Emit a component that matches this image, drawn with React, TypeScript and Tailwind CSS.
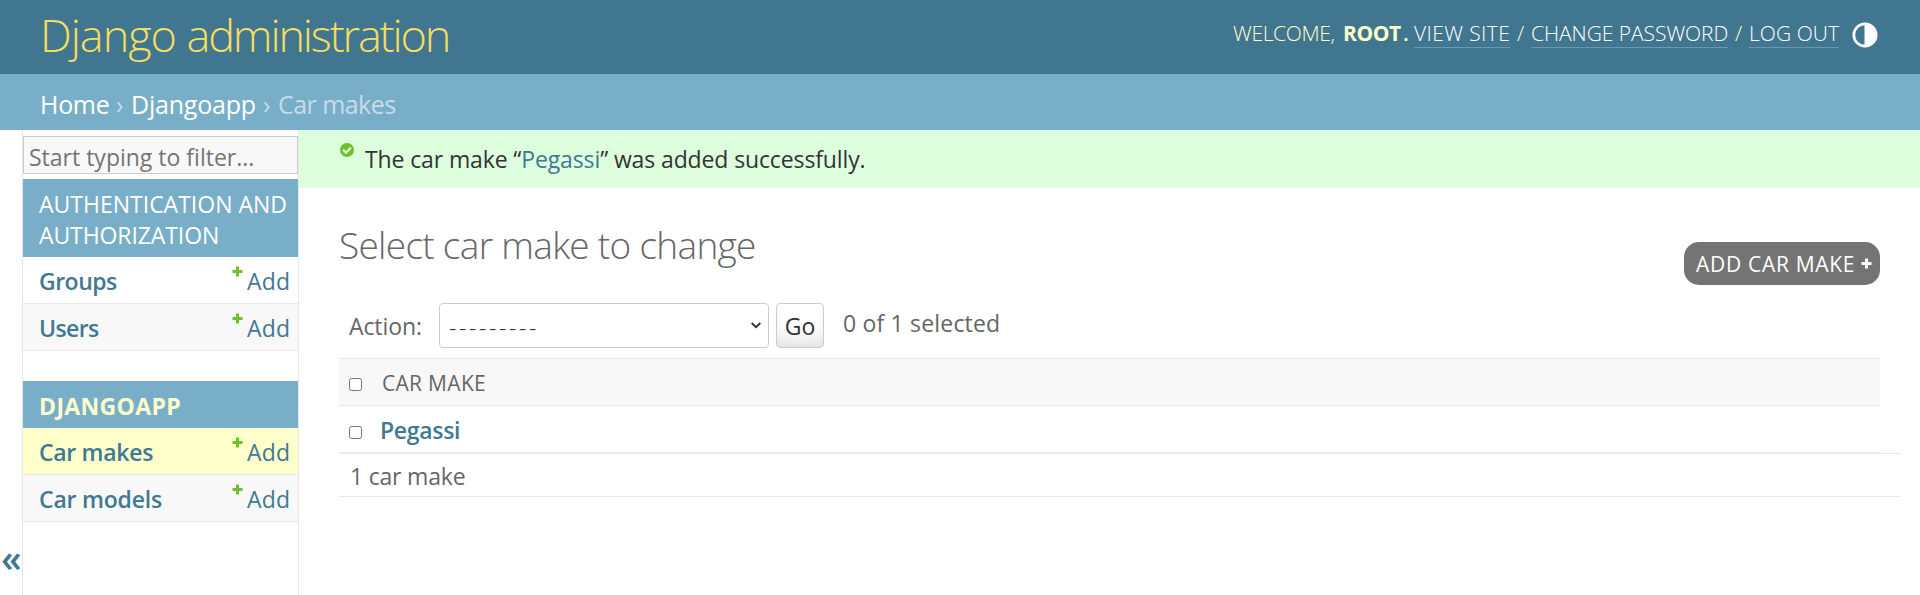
import React from "react";

function PlusIcon({ className }: { className: string }) {
  return (
    <svg viewBox="0 0 11 11" className={className} aria-hidden="true">
      <path
        d="M4 0.500h3v3.500h3.500v3h-3.500v3.500h-3v-3.500h-3.500v-3h3.500z"
        fill="currentColor"
      />
    </svg>
  );
}

function ThemeIcon() {
  return (
    <svg viewBox="0 0 26 26" className="ml-[13px] mt-[3px] h-[26px] w-[26px]" aria-hidden="true">
      <circle cx="13" cy="13" r="11.200" fill="none" stroke="#fff" strokeWidth="2.700" />
      <path d="M12.500 1a12 12 0 0 1 0 24z" fill="#fff" />
    </svg>
  );
}

function SuccessIcon() {
  return (
    <svg viewBox="0 0 14 14" className="mt-[13px] h-[14px] w-[14px]" aria-hidden="true">
      <circle cx="7" cy="7" r="7" fill="#70bf2b" />
      <path d="M3.200 6.800l2.800 2.900l4.800-5" fill="none" stroke="#ddffdd" strokeWidth="2.200" />
    </svg>
  );
}

function UserTools() {
  return (
    <div className="flex items-start whitespace-pre pr-[42px] pt-[19px] text-[21px] font-light leading-[28px] text-[#ffffcc]">
      <span className="w-[110px] tracking-[-0.35px]">WELCOME,</span>
      <strong className="w-[60px] font-bold tracking-[-0.4px]">ROOT</strong>
      <span className="w-[11px] font-semibold">.</span>
      <a className="w-[96px] border-b border-[#6c98ab] tracking-[0.4px] text-white">VIEW SITE</a>
      <span className="w-[21px] text-center">/</span>
      <a className="w-[197px] border-b border-[#6c98ab] tracking-[-0.05px] text-white">CHANGE PASSWORD</a>
      <span className="w-[21px] text-center">/</span>
      <a className="w-[90px] border-b border-[#6c98ab] tracking-[0.05px] text-white">LOG OUT</a>
      <ThemeIcon />
    </div>
  );
}

function ModelRow({ label, tone, spacing }: { label: string; tone: string; spacing: string }) {
  return (
    <div className={`flex h-[47px] items-start border-b border-[#e8e8e8] pl-4 pr-[8px] text-[#417893] ${tone}`}>
      <a className={`flex-1 pt-px font-semibold leading-[46px] ${spacing}`}>{label}</a>
      <PlusIcon className="mr-1 mt-[9px] h-[11px] w-[11px] text-[#70bf2b]" />
      <a className="w-[43px] pt-px leading-[46px] tracking-[0.15px]">Add</a>
    </div>
  );
}

function Sidebar() {
  return (
    <div className="flex shrink-0">
      <button className="h-[465px] w-[22px] pt-[390px] text-left text-[37px] font-semibold leading-[50px] text-[#417893]">
        <span className="block pl-[1px]">«</span>
      </button>
      <nav className="h-[465px] w-[277px] border-x border-[#e8e8e8] text-[23px]">
        <input
          placeholder="Start typing to filter..."
          className="mt-[6px] block h-[38px] w-[275px] border border-[#ccc] bg-[#f8f8f8] pl-[5px] pt-[3px] placeholder:text-[#757575] placeholder:opacity-100"
        />
        <div className="mt-[5px] h-[78px] whitespace-nowrap bg-[#79aec8] pl-4 pt-[10px] leading-[31px] text-white">
          <div>AUTHENTICATION AND</div>
          <div className="tracking-[-0.1px]">AUTHORIZATION</div>
        </div>
        <ModelRow label="Groups" tone="bg-white" spacing="tracking-[-0.5px]" />
        <ModelRow label="Users" tone="bg-[#f8f8f8]" spacing="tracking-[-0.6px]" />
        <div className="mt-[30px] h-[47px] bg-[#79aec8] pl-4 pt-[2px] font-bold leading-[46px] tracking-[0.35px] text-[#ffffcc]">
          DJANGOAPP
        </div>
        <ModelRow label="Car makes" tone="bg-[#ffffcc]" spacing="tracking-[-0.3px]" />
        <ModelRow label="Car models" tone="bg-[#f8f8f8]" spacing="tracking-[-0.2px]" />
      </nav>
    </div>
  );
}

function Results() {
  return (
    <div className="ml-10 mr-5 text-[23px] text-[#666]">
      <div className="mr-5 flex h-[48px] items-center border-y border-[#e8e8e8] bg-[#f8f8f8] pl-[10px]">
        <input type="checkbox" className="mt-[5px] h-[13px] w-[13px]" />
        <span className="ml-5 pt-[4px] text-[21px] font-medium tracking-[0.3px]">CAR MAKE</span>
      </div>
      <div className="mr-5 flex h-[47px] items-center border-b border-[#e8e8e8] pl-[10px]">
        <input type="checkbox" className="mt-[6px] h-[13px] w-[13px]" />
        <a className="ml-[18px] pt-[3px] font-semibold tracking-[-0.3px] text-[#417893]">Pegassi</a>
      </div>
      <div className="h-[44px] border-y border-[#e8e8e8] pl-[11px] pt-px leading-[42px] tracking-[-0.2px]">
        1 car make
      </div>
    </div>
  );
}

export default function App() {
  return (
    <div className="h-[595px] w-full overflow-hidden bg-white font-['Open_Sans','Noto_Sans',sans-serif]">
      <header className="flex h-[74px] justify-between bg-[#417690]">
        <h1 className="whitespace-nowrap pl-10 text-[45px] font-light leading-[70px] tracking-[-1.05px] text-[#f5dd5d]">
          Django <span className="tracking-[-2.15px]">administration</span>
        </h1>
        <UserTools />
      </header>
      <div className="flex h-[56px] whitespace-nowrap bg-[#79aec8] pl-10 pt-[3px] text-[25px] leading-[55px] text-[#c4dce8]">
        <a className="w-[76px] tracking-[-0.3px] text-white">Home</a>
        <span className="w-[15px]">›</span>
        <a className="w-[132px] tracking-[-0.2px] text-white">Djangoapp</a>
        <span className="w-[15px]">›</span>
        <span className="tracking-[-0.55px]">Car makes</span>
      </div>
      <div className="flex">
        <Sidebar />
        <main className="min-w-0 flex-1">
          <div className="flex h-[58px] items-start bg-[#ddffdd] pl-[41px] text-[23px] text-[#333]">
            <SuccessIcon />
            <p className="ml-[11px] whitespace-nowrap leading-[59px] tracking-[-0.12px]">
              The car make “<a className="text-[#417893]">Pegassi</a>” was added successfully.
            </p>
          </div>
          <div className="flex h-[115px] items-start justify-between pl-10 pr-10">
            <h2 className="whitespace-nowrap text-[37px] font-light leading-[114px] tracking-[-0.7px] text-[#666]">
              Select car make to change
            </h2>
            <a className="mt-[54px] flex h-[43px] w-[196px] items-start rounded-[15px] bg-[#747474] pl-3 text-[21px] leading-[45px] tracking-[0.7px] text-white">
              <span className="w-[165px] whitespace-nowrap">ADD CAR MAKE</span>
              <PlusIcon className="mt-4 h-[11px] w-[11px]" />
            </a>
          </div>
          <div className="flex h-[55px] items-start whitespace-nowrap pl-[50px] text-[23px] leading-[47px] text-[#666]">
            <label className="w-[90px] tracking-[-0.1px]">Action:</label>
            <div className="flex h-[45px] w-[330px] items-start justify-between rounded-[4px] border border-[#ccc] bg-white pl-[9px] pr-[7px] text-[#333]">
              <span className="font-light tracking-[2.6px]">---------</span>
              <svg viewBox="0 0 10 7" className="mt-[18px] h-[7px] w-[10px]" aria-hidden="true">
                <path d="M0.600 1l4.400 4.200l4.400-4.200" fill="none" stroke="#333" strokeWidth="2" />
              </svg>
            </div>
            <button className="ml-[7px] h-[45px] w-[48px] rounded-[4px] border border-[#ccc] bg-white pt-px leading-[42px] text-[#333] shadow-[inset_0_-15px_20px_-10px_rgba(0,0,0,0.15)]">
              Go
            </button>
            <span className="ml-[19px] -mt-[3px] tracking-[0.18px]">0 of 1 selected</span>
          </div>
          <Results />
        </main>
      </div>
    </div>
  );
}
